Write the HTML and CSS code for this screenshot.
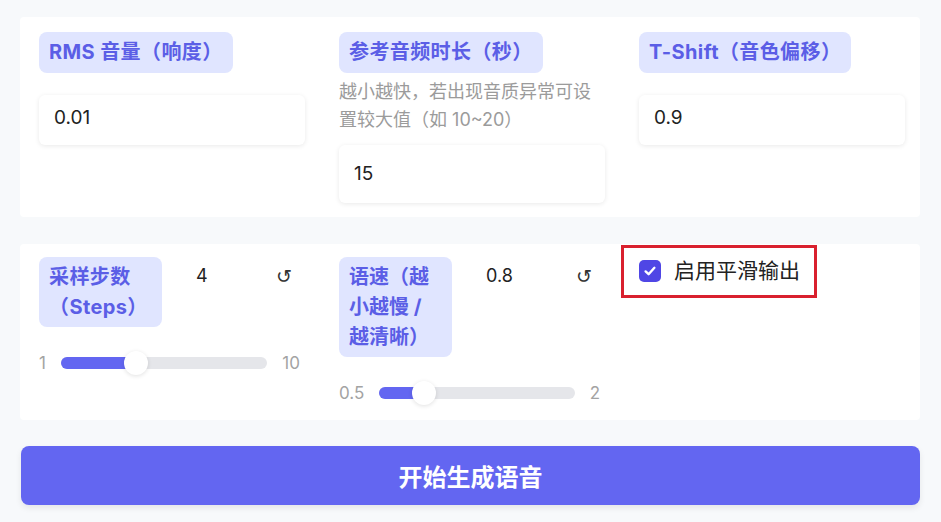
FILE: index.html
```html
<!DOCTYPE html>
<html lang="zh-CN">
<head>
<meta charset="utf-8">
<title>TTS 设置</title>
<link rel="stylesheet" href="styles.css">
</head>
<body>
<main class="page">
  <section class="panel panel-top">
    <div class="field">
      <span class="tag">RMS 音量（响度）</span>
      <div class="input input-gap">0.01</div>
    </div>
    <div class="field">
      <span class="tag">参考音频时长（秒）</span>
      <p class="desc">越小越快，若出现音质异常可设置较大值（如 10~20）</p>
      <div class="input input-after-desc">15</div>
    </div>
    <div class="field">
      <span class="tag">T-Shift（音色偏移）</span>
      <div class="input input-gap">0.9</div>
    </div>
  </section>

  <section class="panel panel-bottom">
    <div class="field">
      <div class="slider-head">
        <span class="tag tag-steps">采样步数（Steps）</span>
        <span class="value">4</span>
        <span class="reset">↺</span>
      </div>
      <div class="slider">
        <span class="bound">1</span>
        <div class="track"><div class="fill" style="width:33.3%"></div><span class="thumb" style="left:33.3%"></span></div>
        <span class="bound">10</span>
      </div>
    </div>
    <div class="field">
      <div class="slider-head">
        <span class="tag tag-speed">语速（越小越慢 / 越清晰）</span>
        <span class="value">0.8</span>
        <span class="reset">↺</span>
      </div>
      <div class="slider">
        <span class="bound">0.5</span>
        <div class="track"><div class="fill" style="width:20%"></div><span class="thumb" style="left:20%"></span></div>
        <span class="bound">2</span>
      </div>
    </div>
    <div class="field">
      <label class="check">
        <span class="box">
          <svg width="14" height="14" viewBox="0 0 14 14"><path d="M2.6 7.4 L5.6 10.2 L11.4 3.8" fill="none" stroke="#fff" stroke-width="2.4" stroke-linecap="round" stroke-linejoin="round"/></svg>
        </span>
        <span class="check-text">启用平滑输出</span>
      </label>
    </div>
  </section>

  <button class="go" type="button">开始生成语音</button>
</main>
</body>
</html>
```
FILE: styles.css
```css
* { box-sizing: border-box; }
html, body { margin: 0; padding: 0; }
body {
  background: #f7f9fb;
  font-family: Inter, "Noto Sans CJK SC", sans-serif;
  color: #222;
  width: 941px;
  height: 522px;
  overflow: hidden;
}
.page {
  padding: 17px 21px 0 20px;
}
.panel {
  background: #fff;
  border-radius: 4px;
  display: grid;
  grid-template-columns: 266px 266px 266px;
  column-gap: 34px;
  padding: 15px 15px 15px 19px;
}
.panel-top { padding-bottom: 14px; }
.panel-bottom {
  margin-top: 27px;
  padding-top: 13px;
  padding-bottom: 15px;
}
.field {
  display: flex;
  flex-direction: column;
  align-items: flex-start;
}
.tag {
  display: inline-block;
  background: #e0e5ff;
  color: #5b5ee6;
  font-weight: 700;
  font-size: 20px;
  line-height: 31px;
  letter-spacing: 0.4px;
  padding: 5px 10px;
  border-radius: 8px;
}
.desc {
  margin: 5px 0 0;
  font-size: 18px;
  line-height: 28px;
  color: #9b9b9b;
}
.input {
  align-self: stretch;
  height: 50px;
  background: #fff;
  border-radius: 6px;
  box-shadow: 0 1px 5px rgba(0, 0, 0, 0.09);
  padding-left: 15px;
  font-size: 19px;
  line-height: 46px;
  color: #222;
}
.input-gap { margin-top: 22px; }
.input-after-desc { margin-top: 11px; height: 58px; line-height: 58px; }

.slider-head {
  align-self: stretch;
  display: flex;
  align-items: flex-start;
}
.tag-steps { width: 123px; line-height: 30px; }
.tag-speed { width: 113px; line-height: 30px; letter-spacing: 0; }
.value {
  margin-left: 34px;
  padding-top: 4px;
  font-size: 18px;
  line-height: 30px;
  color: #222;
  flex: 1;
}
.reset {
  padding-top: 4px;
  width: 30px;
  margin-right: 6px;
  text-align: center;
  font-family: "DejaVu Sans", sans-serif;
  font-size: 19px;
  line-height: 30px;
  color: #333;
}
.slider {
  align-self: stretch;
  display: flex;
  align-items: center;
  gap: 15px;
  margin-top: 24px;
  height: 24px;
  padding-right: 5px;
}
.bound {
  font-size: 17px;
  color: #a3a3a3;
}
.track {
  position: relative;
  flex: 1;
  height: 12px;
  border-radius: 6px;
  background: #e5e6ea;
}
.fill {
  height: 12px;
  border-radius: 6px 0 0 6px;
  background: #6366f1;
}
.thumb {
  position: absolute;
  top: -6px;
  width: 24px;
  height: 24px;
  margin-left: -6px;
  border-radius: 50%;
  background: #fff;
  box-shadow: 0 1px 4px rgba(0, 0, 0, 0.12);
}

.check {
  position: relative;
  display: inline-flex;
  align-items: center;
  gap: 13px;
  margin-top: 1px;
  height: 26px;
}
.check::after {
  content: "";
  position: absolute;
  left: -18px;
  right: -17px;
  top: -13px;
  bottom: -14px;
  border: 3px solid #d9202e;
}
.box {
  width: 22px;
  height: 22px;
  border-radius: 5px;
  background: #4f46e5;
  display: flex;
  align-items: center;
  justify-content: center;
}
.check-text {
  font-size: 21px;
  line-height: 26px;
  color: #222;
}

.go {
  display: block;
  width: 899px;
  margin: 26px 0 0 1px;
  height: 59px;
  border: 0;
  border-radius: 8px;
  background: #6366f1;
  color: #fff;
  font-family: Inter, "Noto Sans CJK SC", sans-serif;
  font-weight: 700;
  font-size: 24px;
  box-shadow: 0 3px 6px rgba(0, 0, 0, 0.08);
}
```
